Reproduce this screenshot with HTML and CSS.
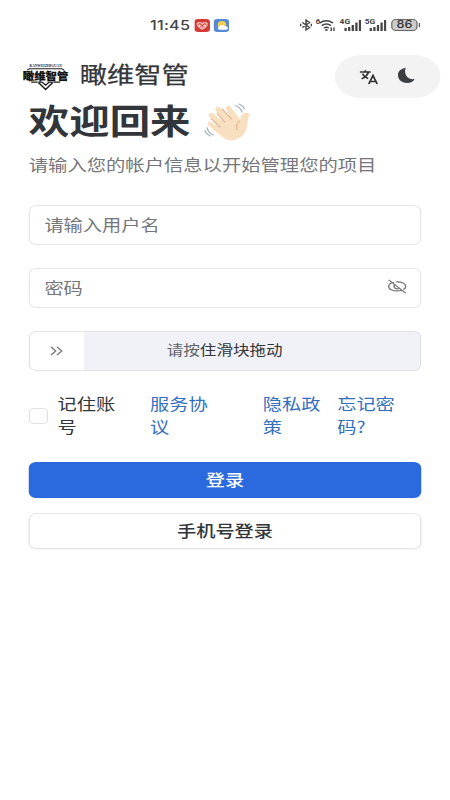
FILE: index.html
```
<!DOCTYPE html>
<html lang="zh-CN">
<head>
<meta charset="utf-8">
<meta name="viewport" content="width=device-width">
<title>瞰维智管</title>
<link rel="stylesheet" href="styles.css">
</head>
<body>
<div class="screen">
  <div class="status">
    <div class="status-left">
      <span class="time">11:45</span>
      <svg class="app" viewBox="0 0 14 14"><rect width="14" height="14" rx="3.5" fill="#d43a38"/><path d="M2 4.500Q4.500 2 7 4.300 9.500 2 12 4.500 12.500 8 7 11.500 1.500 8 2 4.500Z" fill="#f7c5bf"/><path d="M3 6l2-1 2 2 2-2 2 1M5 8.500h4" stroke="#d43a38" fill="none"/></svg>
      <svg class="app" viewBox="0 0 14 14"><rect width="14" height="14" rx="3.500" fill="#5689d6"/><circle cx="7.500" cy="6" r="3.800" fill="#f7cc48"/><path d="M5 11.500a2 2 0 0 1 .3-3.800 2.700 2.700 0 0 1 4.800.2 1.900 1.900 0 0 1 1.500 3.600Z" fill="#fff"/></svg>
    </div>
    <div class="status-right">
      <svg class="bt" viewBox="0 0 10 12"><path d="M2 3.500l6 5-3 2.500V1l3 2.500-6 5M.5 4.800v2.400M9.500 4.800v2.400" fill="none" stroke="#444" stroke-width="1.200"/></svg>
      <svg class="wifi" viewBox="0 0 17 14"><text x="0" y="6" class="net">6</text><path d="M3.500 5q5.500-4.500 11 0M5.200 7.600q3.800-3 7.600 0M7 10q2-1.500 4 0" fill="none" stroke="#444" stroke-width="1.500"/><circle cx="9" cy="12" r="1.100" fill="#444"/><path d="M13 9.500v3.500M15.300 9.500v3.500" stroke="#444" stroke-width="1.200"/></svg>
      <svg class="signal" viewBox="0 0 18 14"><text x="0" y="6.500" class="net">4G</text><path d="M5 10v3M8 9v4M11 7v6M14 4.500V13M17 2v11" stroke="#444" stroke-width="1.900"/></svg>
      <svg class="signal" viewBox="0 0 18 14"><text x="0" y="6.500" class="net">5G</text><path d="M5 10v3M8 9v4M11 7v6M14 4.500V13M17 2v11" stroke="#444" stroke-width="1.900"/></svg>
      <span class="battery">86</span>
    </div>
  </div>

  <header class="header">
    <div class="brand">
      <svg class="logo" viewBox="0 0 40 28">
        <text x="6.500" y="3.900" class="logo-latin" textLength="27" lengthAdjust="spacingAndGlyphs">KANWEIZHIGUAN</text>
        <path d="M4.500 7.200 6.500 5.800h27l2 1.400" stroke="#222" stroke-width=".9" fill="none"/>
        <text x="1" y="16.600" class="logo-name" textLength="38" lengthAdjust="spacingAndGlyphs">瞰维智管</text>
        <path d="M8 19.200h5.500M26.500 19.200H32M14 19.200h3l3 3 3-3h3M14 19.500l6 7 6-7" stroke="#222" stroke-width="1.200" fill="none"/>
      </svg>
      <span class="brand-name">瞰维智管</span>
    </div>
    <div class="tools">
      <svg class="lang" viewBox="0 0 18 18"><path d="M1 3.800h9.500M5.800 1.800v2M2.500 11c3-1.500 5-4 6-7M3.200 5.500c1 2.500 2.700 4 5 5.200M8.800 16.500l3.700-9 3.700 9M10 13.800h5" fill="none" stroke="#333" stroke-width="1.600"/></svg>
      <svg class="moon" viewBox="0 0 16 18"><path d="M7.500.8C2.800 2 .5 5 .7 9c.3 5 3.800 8 8.100 8 3.200 0 5.700-1.500 6.700-4.200C9.500 14 5.500 8 7.500.8Z" fill="#3d3e42"/></svg>
    </div>
  </header>

  <main class="main">
    <h1 class="title"><span>欢迎回来</span>
      <svg class="wave" viewBox="0 0 40 40">
        <path d="M13 32 3.500 22.500Q2 19 5.500 19.500L12 24 4 13.500Q3.500 9.500 7.500 10.500L15 17.500 9.500 6.500Q10.500 2.500 14 4.500L22 14 18.500 5Q19.500 1.500 22.500 3.500L31 17Q31.500 11 35.500 10q4-.5 3 4-1.500 3-1.500 8-1 12-9.500 15.500C22 40 17 37 13 32Z" fill="#f8dfc0"/>
        <path d="M14 25 6 16M18 20 11 10M24 17 15.500 6M30.500 18q-4 4-2 10" fill="none" stroke="#dfbd98" stroke-width="1.200"/>
        <path d="M26.500 2.500q5 2 6 7M29.500 .8q4 2 5 5.500M2.500 25q1 6 6 8M.8 28q1 4 5 6" fill="none" stroke="#a9b5c1" stroke-width="1.200"/>
      </svg>
    </h1>
    <p class="subtitle">请输入您的帐户信息以开始管理您的项目</p>

    <div class="field">请输入用户名</div>
    <div class="field"><span>密码</span>
      <svg class="eye" viewBox="0 0 18 18"><path d="M6 4.200C2.700 5 1 7 1 9c0 2.800 3.600 5 8 5 1.500 0 3-.3 4.200-.8M8 3.800c5-.4 9 2 9 5.200 0 1.200-.8 2.500-2.200 3.400M6.700 7a2.800 2.800 0 1 0 4.500 3.500M1 1.500l16 15" fill="none" stroke="#777" stroke-width="1.350"/></svg>
    </div>
    <div class="slider">
      <div class="handle"><svg viewBox="0 0 12 12"><path d="M1.500 2l4 4-4 4M6.500 2l4 4-4 4" fill="none" stroke="#777" stroke-width="1.100"/></svg></div>
      <div class="slider-text"><span class="shine">请按</span>住滑块拖动</div>
    </div>

    <div class="options">
      <span class="checkbox"></span>
      <span class="remember">记住账号</span>
      <a class="terms">服务协议</a>
      <a class="privacy">隐私政策</a>
      <a class="forgot">忘记密码?</a>
    </div>

    <div class="button primary">登录</div>
    <div class="button">手机号登录</div>
  </main>
</div>
</body>
</html>
```
FILE: styles.css
```
* { box-sizing: border-box; }
body {
  margin: 0;
  background: #fff;
  overflow: hidden;
  color: #323539;
  font-family: "Noto Sans CJK SC", sans-serif;
}
/* 375px layout stretched to the 450px viewport */
.screen {
  width: 375px;
  height: 800px;
  transform: scaleX(1.2);
  transform-origin: 0 0;
}
svg { display: block; flex: none; }

.status {
  height: 50px;
  padding: 0 25px 0 125px;
  display: flex;
  align-items: center;
  justify-content: space-between;
}
.status-left, .status-right { display: flex; align-items: center; }
.status-left { gap: 3px; }
.time {
  font: 500 13.5px/20px Inter, sans-serif;
  letter-spacing: .2px;
  width: 34px;
  white-space: nowrap;
  color: #444;
}
.app { width: 13px; height: 13px; }
.status-right { gap: 3px; }
.bt { width: 10px; height: 12px; }
.wifi { width: 17px; height: 14px; }
.signal { width: 18px; height: 14px; }
.net { font: 700 7px Roboto, sans-serif; fill: #444; }
.battery {
  position: relative;
  width: 22px;
  height: 12px;
  margin: 0 2px 0 1px;
  border: 1px solid #666;
  border-radius: 4px;
  background: #ccc;
  font: 500 10.5px/10px Inter, sans-serif;
  text-align: center;
  color: #333;
}
.battery::after {
  content: "";
  position: absolute;
  right: -3px;
  top: 3px;
  width: 1.5px;
  height: 4px;
  background: #555;
}

.header {
  height: 53px;
  padding: 5px 8px 0 18px;
  display: flex;
  align-items: flex-start;
  justify-content: space-between;
}
.brand { display: flex; align-items: center; height: 42px; gap: 8.5px; }
.logo { width: 40px; height: 28px; margin-top: 2px; overflow: visible; }
.logo-latin { font: 700 3px "Liberation Serif", serif; fill: #222; }
.logo-name { font: 900 10px "Noto Sans CJK SC", sans-serif; fill: #111; stroke: #111; stroke-width: .2px; }
.brand-name { font-size: 22.7px; line-height: 42px; font-weight: 400; margin-top: -5px; -webkit-text-stroke: .25px; }
.tools {
  width: 88px;
  height: 43px;
  border-radius: 22px;
  background: #f3f3f4;
  display: flex;
  align-items: center;
  padding-left: 19.5px;
  gap: 15px;
}
.lang { width: 17px; height: 18px; }
.moon { width: 15px; height: 17px; margin-top: -3px; }

.main { padding: 0 24px; }
.title {
  margin: 0;
  height: 38px;
  display: flex;
  align-items: center;
  gap: 11px;
  font-size: 33.7px;
  line-height: 38px;
  font-weight: 700;
}
.title span { margin-top: -4px; }
.wave { width: 39px; height: 39px; }
.subtitle {
  margin: 11px 0 28px;
  font-size: 16.1px;
  line-height: 25px;
  color: #75767b;
  white-space: nowrap;
}
.field {
  height: 40px;
  margin-bottom: 23px;
  padding: 0 11px 0 12px;
  border: 1px solid #e6e6e9;
  border-radius: 6px;
  display: flex;
  align-items: center;
  justify-content: space-between;
  font-size: 16px;
  line-height: 34px;
  padding-bottom: 3px;
  color: #75767b;
}
.eye { width: 16px; height: 17px; }
.slider {
  height: 40px;
  border: 1px solid #e2e3e7;
  border-radius: 6px;
  background: #f0f2f7;
  display: flex;
  align-items: center;
  overflow: hidden;
}
.handle {
  width: 44.5px;
  height: 38px;
  padding-right: 1px;
  background: #fff;
  display: flex;
  align-items: center;
  justify-content: center;
}
.handle svg { width: 12px; height: 12px; }
.slider-text { flex: 1; padding: 0 45px 3px 0; text-align: center; font-size: 13.8px; line-height: 35px; }
.shine { color: #606268; }

.options {
  height: 46px;
  margin: 21px 0 24px;
  display: grid;
  grid-template-columns: 24px 77px 94px 62px 50px;
  align-items: center;
  font-size: 16px;
  line-height: 23px;
}
.options a, .remember { width: 50px; word-break: break-all; }
.options a { color: #356fc0; }
.checkbox { width: 16px; height: 16px; margin-top: 2px; border: 1px solid #e2e2e5; border-radius: 4px; }

.button {
  height: 36px;
  margin-bottom: 15px;
  border: 1px solid #e6e6e9;
  border-radius: 6px;
  box-shadow: 0 1px 2px rgba(0, 0, 0, .05);
  font-size: 16px;
  line-height: 32px;
  font-weight: 500;
  text-align: center;
}
.primary { background: #2b69df; border-color: #2b69df; color: #fff; }
```
